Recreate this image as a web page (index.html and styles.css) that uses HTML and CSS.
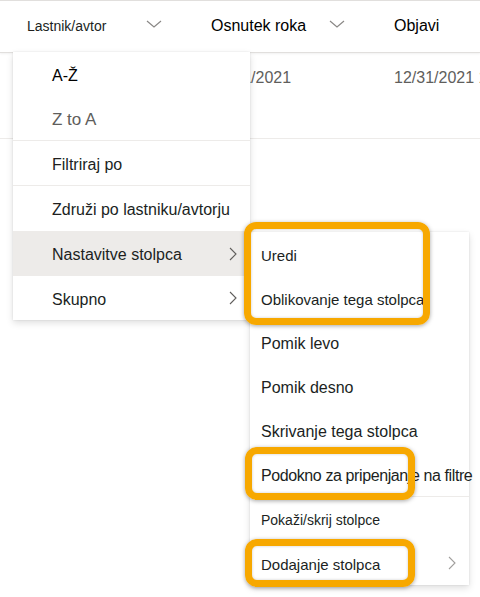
FILE: index.html
```html
<!DOCTYPE html>
<html lang="sl">
<head>
<meta charset="utf-8">
<title>Meni stolpca</title>
<link rel="stylesheet" href="styles.css">
</head>
<body>
<div class="page">
  <div class="header">
    <div class="col"><span class="h-small">Lastnik/avtor</span>
      <svg class="chev-down" viewBox="0 0 16 8" width="16" height="8"><path d="M1 1 L8 7 L15 1" fill="none" stroke="#8a8886" stroke-width="1.2"/></svg>
    </div>
    <div class="col"><span>Osnutek roka</span>
      <svg class="chev-down" viewBox="0 0 16 8" width="16" height="8"><path d="M1 1 L8 7 L15 1" fill="none" stroke="#8a8886" stroke-width="1.2"/></svg>
    </div>
    <div class="col"><span>Objavi</span></div>
  </div>
  <div class="row">
    <div class="cell"></div>
    <div class="cell">12/31/2021</div>
    <div class="cell">12/31/2021 12:00 AM</div>
  </div>

  <div class="menu main-menu">
    <div class="item dark">A-Ž</div>
    <div class="item gray">Z to A</div>
    <div class="sep"></div>
    <div class="item">Filtriraj po</div>
    <div class="sep"></div>
    <div class="item tall">Združi po lastniku/avtorju</div>
    <div class="item tall active">Nastavitve stolpca
      <svg class="chev-right" viewBox="0 0 8 14" width="8" height="14"><path d="M1 1 L7 7 L1 13" fill="none" stroke="#605e5c" stroke-width="1.1"/></svg>
    </div>
    <div class="item">Skupno
      <svg class="chev-right" viewBox="0 0 8 14" width="8" height="14"><path d="M1 1 L7 7 L1 13" fill="none" stroke="#605e5c" stroke-width="1.1"/></svg>
    </div>
  </div>

  <div class="menu sub-menu">
    <div class="item md">Uredi</div>
    <div class="item md">Oblikovanje tega stolpca</div>
    <div class="item">Pomik levo</div>
    <div class="item">Pomik desno</div>
    <div class="item">Skrivanje tega stolpca</div>
    <div class="item tight">Podokno za pripenjanje na filtre</div>
    <div class="sep"></div>
    <div class="item sm">Pokaži/skrij stolpce</div>
    <div class="item md">Dodajanje stolpca
      <svg class="chev-right light" viewBox="0 0 8 14" width="8" height="14"><path d="M1 1 L7 7 L1 13" fill="none" stroke="#a19f9d" stroke-width="1.1"/></svg>
    </div>
  </div>

  <div class="hl hl-1"></div>
  <div class="hl hl-2"></div>
  <div class="hl hl-3"></div>
</div>
</body>
</html>
```

FILE: styles.css
```css
* { box-sizing: border-box; }
html, body { margin: 0; padding: 0; background: #fff; }
body {
  font-family: "Liberation Sans", Arial, sans-serif;
  color: #201f1e;
  width: 480px;
  height: 597px;
  overflow: hidden;
}
.page { position: relative; width: 480px; height: 597px; overflow: hidden; }

.header {
  display: grid;
  grid-template-columns: 184px 183px 1fr;
  padding-left: 27px;
  height: 53px;
  border-top: 1px solid #e1dfdd;
  border-bottom: 1px solid #e1dfdd;
  box-shadow: 0 1px 2px rgba(0,0,0,0.06);
  align-items: center;
}
.col {
  display: flex;
  align-items: center;
  font-size: 16px;
  color: #000;
  padding-bottom: 2px;
}
.col .h-small { font-size: 14px; color: #201f1e; }
.chev-down { margin-left: auto; margin-right: 49px; margin-top: -4px; }

.row {
  display: grid;
  grid-template-columns: 184px 183px 1fr;
  padding-left: 27px;
  height: 86px;
  border-bottom: 1px solid #edebe9;
  padding-top: 16px;
  font-size: 16px;
  color: #605e5c;
  white-space: nowrap;
}

.menu {
  position: absolute;
  background: #fff;
  box-shadow: 0 3px 7px rgba(0,0,0,0.13), 0 0 2px rgba(0,0,0,0.1);
}
.main-menu { left: 13px; top: 52px; width: 237px; }
.sub-menu { left: 250px; top: 232px; width: 219px; }

.item {
  height: 44px;
  display: flex;
  align-items: center;
  font-size: 16px;
  color: #201f1e;
  white-space: nowrap;
  padding-top: 3px;
}
.item.tall { height: 45px; }
.main-menu .item { padding-left: 39px; padding-right: 13px; }
.sub-menu .item { padding-left: 11px; padding-right: 13px; }
.item.dark { color: #000; }
.item.gray { color: #605e5c; font-size: 17px; }
.item.active { background: #edebe9; }
.item.md { font-size: 15px; }
.item.sm { font-size: 14px; padding-top: 2px; }
.item.tight { letter-spacing: -0.4px; }
.sep { height: 1px; background: #edebe9; }
.chev-right { margin-left: auto; margin-top: -3px; }

.hl {
  position: absolute;
  border: 7px solid #f7a800;
  border-radius: 12px;
  box-shadow: 0 1px 4px rgba(0,0,0,0.35), inset 0 0 3px rgba(0,0,0,0.2);
}
.hl-1 { left: 244px; top: 222px; width: 186px; height: 103px; }
.hl-2 { left: 245px; top: 447px; width: 170px; height: 53px; }
.hl-3 { left: 245px; top: 539px; width: 170px; height: 48px; }
```
